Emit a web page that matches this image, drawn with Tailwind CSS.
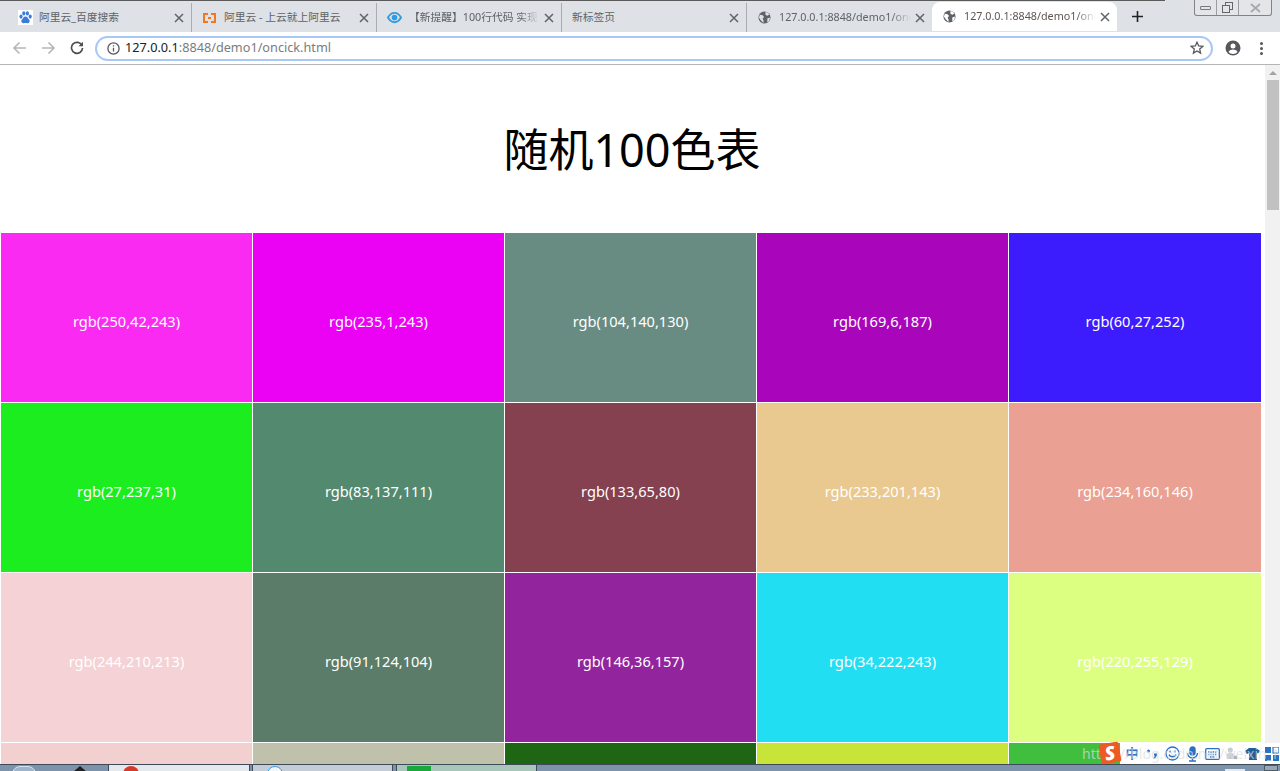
<!DOCTYPE html>
<html lang="zh-CN">
  <head>
    <meta charset="UTF-8" />
    <title>随机100色表</title>
    <script src="https://cdn.jsdelivr.net/npm/@tailwindcss/browser@4"></script>
  </head>
  <body class="relative flex flex-col h-screen overflow-hidden bg-white font-['Noto_Sans','Noto_Sans_CJK_SC',sans-serif]">
    <!-- tab strip -->
    <div class="relative flex items-start h-8 pl-[7px] pt-[3px] bg-[#dee1e6] text-[10.750px] text-[#5f6368] shrink-0">
      <div class="absolute top-0 left-0 w-[1165px] h-px bg-[#5a5a5a]"></div>
      <div class="flex items-center w-[185px] h-[29px] pl-[11px] pr-1 border-r border-[#a9acb0]">
        <svg class="w-[15px] h-[15px] mr-[6px] shrink-0" viewBox="0 0 16 16"><rect width="16" height="16" fill="#fff"/><g fill="#3b7bdd"><ellipse cx="3.200" cy="7" rx="1.700" ry="2.200"/><ellipse cx="6.200" cy="3.600" rx="1.700" ry="2.300"/><ellipse cx="10" cy="3.600" rx="1.700" ry="2.300"/><ellipse cx="13" cy="7" rx="1.700" ry="2.200"/><path d="M8 7c-2 0-2.500 2-4 3.500C2.800 12 4 14.500 6 14c1-.2 3-.2 4 0 2 .5 3.200-2 2-3.500C10.500 9 10 7 8 7z"/></g></svg>
        <span class="flex-1 truncate">阿里云_百度搜索</span>
        <svg class="w-2.5 h-2.5 ml-1 mr-[3px]" viewBox="0 0 10 10" stroke="#5f6368" stroke-width="1.500"><path d="M1 1l8 8M9 1l-8 8"/></svg>
      </div>
      <div class="flex items-center w-[185px] h-[29px] pl-[11px] pr-1 border-r border-[#a9acb0]">
        <svg class="w-[13px] h-[10px] mr-[8px] shrink-0" viewBox="0 0 13 10" fill="none" stroke="#f4761d" stroke-width="2"><path d="M5 1H1v8h4M8 1h4v8H8M5 5h3"/></svg>
        <span class="flex-1 truncate">阿里云 - 上云就上阿里云</span>
        <svg class="w-2.5 h-2.5 ml-1 mr-[3px]" viewBox="0 0 10 10" stroke="#5f6368" stroke-width="1.500"><path d="M1 1l8 8M9 1l-8 8"/></svg>
      </div>
      <div class="flex items-center w-[185px] h-[29px] pl-[10px] pr-1 border-r border-[#a9acb0]">
        <svg class="w-[15px] h-[13px] mr-[7px] shrink-0" viewBox="0 0 16 13" fill="none" stroke="#2f9ce0" stroke-width="2"><path d="M1 6.500C3 3 5.500 1.500 8 1.500s5 1.500 7 5c-2 3.500-4.500 5-7 5s-5-1.500-7-5z"/><circle cx="8" cy="6.500" r="2" fill="#2f9ce0"/></svg>
        <span class="flex-1 whitespace-nowrap overflow-hidden [mask-image:linear-gradient(90deg,#000_85%,transparent)]">【新提醒】100行代码 实现</span>
        <svg class="w-2.5 h-2.5 ml-1 mr-[3px]" viewBox="0 0 10 10" stroke="#5f6368" stroke-width="1.500"><path d="M1 1l8 8M9 1l-8 8"/></svg>
      </div>
      <div class="flex items-center w-[185px] h-[29px] pl-[10px] pr-1 border-r border-[#a9acb0]">
        <span class="flex-1 truncate">新标签页</span>
        <svg class="w-2.5 h-2.5 ml-1 mr-[3px]" viewBox="0 0 10 10" stroke="#5f6368" stroke-width="1.500"><path d="M1 1l8 8M9 1l-8 8"/></svg>
      </div>
      <div class="flex items-center w-[185px] h-[29px] pl-[11px] pr-1">
        <svg class="w-[13px] h-[13px] mr-[8px] shrink-0" viewBox="0 0 14 14"><circle cx="7" cy="7" r="6.500" fill="#5f6368"/><path d="M2 4l3 .5 1.500 2L5 8l1 2.500V13L3 10 1 7zM8 1l3 1 1 2-2 1-2-1zM10 8l3-1-1 4-2 1z" fill="#dee1e6"/></svg>
        <span class="flex-1 whitespace-nowrap overflow-hidden [mask-image:linear-gradient(90deg,#000_85%,transparent)]">127.0.0.1:8848/demo1/oncick</span>
        <svg class="w-2.5 h-2.5 ml-1 mr-[3px]" viewBox="0 0 10 10" stroke="#5f6368" stroke-width="1.500"><path d="M1 1l8 8M9 1l-8 8"/></svg>
      </div>
      <div class="flex items-center w-[185px] h-[29px] pl-[11px] pr-1 -mt-px bg-white rounded-t-lg text-[#5f5550]">
        <svg class="w-[13px] h-[13px] mr-[8px] shrink-0" viewBox="0 0 14 14"><circle cx="7" cy="7" r="6.500" fill="#5f6368"/><path d="M2 4l3 .5 1.500 2L5 8l1 2.500V13L3 10 1 7zM8 1l3 1 1 2-2 1-2-1zM10 8l3-1-1 4-2 1z" fill="#fff"/></svg>
        <span class="flex-1 whitespace-nowrap overflow-hidden [mask-image:linear-gradient(90deg,#000_85%,transparent)]">127.0.0.1:8848/demo1/oncick</span>
        <svg class="w-2.5 h-2.5 ml-1 mr-[3px]" viewBox="0 0 10 10" stroke="#5f6368" stroke-width="1.500"><path d="M1 1l8 8M9 1l-8 8"/></svg>
      </div>
      <svg class="w-[11px] h-[11px] ml-[15px] mt-[8px]" viewBox="0 0 11 11" stroke="#202124" stroke-width="1.600"><path d="M5.500 0v11M0 5.500h11"/></svg>
      <!-- window buttons -->
      <div class="absolute top-0 left-[1194px] flex h-4 w-[78px] bg-[#e3e5e9] border border-t-0 border-[#7f8388] rounded-b-[3px]">
        <div class="flex items-center justify-center w-[22px] border-r border-[#9a9da2]"><div class="w-[11px] h-1 border border-[#777] rounded-[1px]"></div></div>
        <div class="flex items-center justify-center w-[22px] border-r border-[#9a9da2]"><svg class="w-[11px] h-[11px]" viewBox="0 0 11 11" fill="none" stroke="#666"><rect x="3.500" y=".5" width="7" height="7"/><rect x=".5" y="3.500" width="7" height="7" fill="#e3e5e9"/></svg></div>
        <div class="flex items-center justify-center flex-1"><svg class="w-[11px] h-[10px]" viewBox="0 0 11 10" stroke="#a6a9ae" stroke-width="1.800"><path d="M1 1l9 8M10 1l-9 8"/></svg></div>
      </div>
    </div>
    <!-- toolbar -->
    <div class="flex items-center h-[33px] pl-3 pr-[17px] border-b border-[#b5b5b5] shrink-0">
      <svg class="w-[15px] h-[14px]" viewBox="0 0 15 14" fill="none" stroke="#b4b6b9" stroke-width="1.600"><path d="M14 7H2M7.500 1.500 2 7l5.500 5.500"/></svg>
      <svg class="w-[15px] h-[14px] ml-[14px]" viewBox="0 0 15 14" fill="none" stroke="#b4b6b9" stroke-width="1.600"><path d="M1 7h12M7.500 1.500 13 7l-5.500 5.500"/></svg>
      <svg class="w-[14px] h-[14px] ml-[14px]" viewBox="0 0 14 14" fill="none" stroke="#4c4f53" stroke-width="1.700"><path d="M12 4.500A5.500 5.500 0 1 0 12.500 7"/><path d="M13 .8v4.500H8.500" fill="#4c4f53" stroke="none"/></svg>
      <div class="flex items-center flex-1 h-[25px] ml-[11px] pl-[10px] pr-[7px] border-2 border-[#a9c8f5] rounded-full text-[12.700px]">
        <svg class="w-[13px] h-[13px] mr-[5px]" viewBox="0 0 13 13" fill="none" stroke="#55585c" stroke-width="1.300"><circle cx="6.500" cy="6.500" r="5.600"/><path d="M6.500 5.800v3.700M6.500 3.300v1.200"/></svg>
        <span class="text-[#202124]">127.0.0.1</span><span class="flex-1 text-[#7a7d81]">:8848/demo1/oncick.html</span>
        <svg class="w-[14px] h-[14px]" viewBox="0 0 14 14" fill="none" stroke="#55585c" stroke-width="1.300"><path d="M7 1.200 8.700 5l4.100.4-3.100 2.700.9 4L7 10l-3.600 2.100.9-4-3.100-2.700L5.300 5z"/></svg>
      </div>
      <svg class="w-[16px] h-[16px] ml-[12px]" viewBox="0 0 16 16"><circle cx="8" cy="8" r="7.500" fill="#55585c"/><circle cx="8" cy="6" r="2.500" fill="#fff"/><path d="M3.500 12c1-2 2.800-2.600 4.500-2.600s3.500.6 4.500 2.600c-1 1.200-2.700 2-4.500 2s-3.500-.8-4.500-2z" fill="#fff"/></svg>
      <div class="flex flex-col gap-[2px] ml-[19px]">
        <div class="w-[3px] h-[3px] rounded-full bg-[#55585c]"></div>
        <div class="w-[3px] h-[3px] rounded-full bg-[#55585c]"></div>
        <div class="w-[3px] h-[3px] rounded-full bg-[#55585c]"></div>
      </div>
    </div>
    <!-- page area -->
    <div class="flex flex-1 min-h-0">
      <div class="flex-1 min-w-0 overflow-hidden">
        <h1 class="h-[168px] pt-[51px] pr-[1px] text-center text-[45px] leading-[68px] font-normal text-black">随机100色表</h1>
        <div class="grid grid-cols-[251px_251px_251px_251px_252px] auto-rows-[169px] gap-px w-[1261px] ml-px text-[14.600px] text-white">
          <div class="flex items-center justify-center pt-2 bg-[rgb(250,42,243)]">rgb(250,42,243)</div>
          <div class="flex items-center justify-center pt-2 bg-[rgb(235,1,243)]">rgb(235,1,243)</div>
          <div class="flex items-center justify-center pt-2 bg-[rgb(104,140,130)]">rgb(104,140,130)</div>
          <div class="flex items-center justify-center pt-2 bg-[rgb(169,6,187)]">rgb(169,6,187)</div>
          <div class="flex items-center justify-center pt-2 bg-[rgb(60,27,252)]">rgb(60,27,252)</div>
          <div class="flex items-center justify-center pt-2 bg-[rgb(27,237,31)]">rgb(27,237,31)</div>
          <div class="flex items-center justify-center pt-2 bg-[rgb(83,137,111)]">rgb(83,137,111)</div>
          <div class="flex items-center justify-center pt-2 bg-[rgb(133,65,80)]">rgb(133,65,80)</div>
          <div class="flex items-center justify-center pt-2 bg-[rgb(233,201,143)]">rgb(233,201,143)</div>
          <div class="flex items-center justify-center pt-2 bg-[rgb(234,160,146)]">rgb(234,160,146)</div>
          <div class="flex items-center justify-center pt-2 bg-[rgb(244,210,213)]">rgb(244,210,213)</div>
          <div class="flex items-center justify-center pt-2 bg-[rgb(91,124,104)]">rgb(91,124,104)</div>
          <div class="flex items-center justify-center pt-2 bg-[rgb(146,36,157)]">rgb(146,36,157)</div>
          <div class="flex items-center justify-center pt-2 bg-[rgb(34,222,243)]">rgb(34,222,243)</div>
          <div class="flex items-center justify-center pt-2 bg-[rgb(220,255,129)]">rgb(220,255,129)</div>
          <div class="bg-[#f3d0d0]"></div>
          <div class="bg-[#bfc1ab]"></div>
          <div class="bg-[#1f6614]"></div>
          <div class="bg-[#c9e438]"></div>
          <div class="bg-[#40bf3f]"></div>
        </div>
      </div>
      <!-- scrollbar -->
      <div class="flex flex-col items-center w-[15px] bg-[#f1f1f1] shrink-0">
        <div class="mt-[6px] w-0 h-0 border-x-[4px] border-x-transparent border-b-[4px] border-b-[#a3a3a3]"></div>
        <div class="mt-[5px] w-3 h-[130px] ml-px bg-[#c1c1c1]"></div>
      </div>
    </div>
    <!-- taskbar, only its top edge is in frame -->
    <div class="flex items-start h-[7px] bg-[#7d93ab] border-t border-[#3e4a57] shrink-0">
      <div class="w-6 h-4 ml-3 mt-px rounded-full bg-[#9db4cb] border border-[#d5e3f0]"></div>
      <div class="w-0 h-0 ml-[37px] mt-px border-x-[7px] border-x-transparent border-b-[6px] border-b-[#1e2226]"></div>
      <div class="relative w-[142px] h-full ml-[21px] bg-[#e4e9ee] border-x border-[#3e4a57]"><div class="absolute left-[14px] top-[1px] w-4 h-4 rounded-full bg-[#d8392b]"></div></div>
      <div class="relative w-[141px] h-full ml-[2px] bg-[#c4ccd8] border-x border-[#3e4a57]"><div class="absolute left-[14px] top-[1px] w-4 h-4 rounded-full bg-[#f0f6fb] border border-[#3d9be0]"></div></div>
      <div class="relative w-[141px] h-full ml-[3px] bg-[#a9c6bb] border-x border-[#3e4a57]"><div class="absolute left-[10px] top-[1px] w-6 h-4 bg-[#1aa73c]"></div></div>
      <div class="w-[20px] h-[2px] ml-[688px] mt-[4px] bg-white/80"></div>
      <div class="w-[14px] h-full ml-[19px] bg-[#98a6b5] border border-[#4e5b68]"></div>
    </div>
    <!-- input method bar and watermark over the page -->
    <div class="absolute left-[1120px] top-[743px] grid grid-cols-[repeat(8,20px)] items-center justify-items-center w-[160px] h-[21px] pl-[2px] bg-white text-[#2a71c4]">
      <span class="text-[13px] leading-none font-bold">中</span>
      <svg class="w-[12px] h-[12px]" viewBox="0 0 12 12" fill="#2a71c4"><circle cx="2.500" cy="3" r="1.500"/><path d="M8 5.500h3c0 2.500-1 4-3 5.500l-.8-.8C8.200 9.200 8.600 8.400 8.700 7.500H8z"/></svg>
      <svg class="w-[15px] h-[15px]" viewBox="0 0 15 15" fill="none" stroke="#2a71c4" stroke-width="1.300"><circle cx="7.500" cy="7.500" r="6.500"/><path d="M4 8.500c1 3 6 3 7 0"/><path d="M5 4.500v2M10 4.500v2"/></svg>
      <svg class="w-[13px] h-[16px]" viewBox="0 0 13 16" fill="none" stroke="#2a71c4" stroke-width="1.400"><rect x="4" y="1" width="5" height="8" rx="2.500" fill="#2a71c4"/><path d="M1.500 7a5 5 0 0 0 10 0M6.500 12v3M3 15h7"/></svg>
      <svg class="w-[15px] h-[12px]" viewBox="0 0 15 12" fill="none" stroke="#2a71c4" stroke-width="1.300"><rect x=".7" y=".7" width="13.600" height="10.600" rx="1"/><path d="M3 4h9M3 6.500h9M5 9h5" stroke-dasharray="1.500 .8"/></svg>
      <svg class="w-[12px] h-[15px]" viewBox="0 0 14 15" fill="#c7ccd2"><circle cx="5" cy="3.500" r="3"/><path d="M1 14V9c0-1.500 2-2.500 4-2.500S9 7.500 9 9v5z"/><rect x="9" y="10" width="4" height="4" fill="#aab0b8"/></svg>
      <svg class="w-[15px] h-[14px]" viewBox="0 0 15 14" fill="#1f5f98"><path d="M4 1 0 4l2 3 2-1v7h8V6l1 .5L15 4 11 1z"/></svg>
      <svg class="w-[14px] h-[14px]" viewBox="0 0 14 14" fill="#2a71c4"><rect width="6" height="6"/><rect x="8" width="6" height="6" fill="none" stroke="#2a71c4" stroke-width="1.200"/><rect y="8" width="6" height="6"/><rect x="8" y="8" width="6" height="6"/></svg>
    </div>
    <div class="absolute left-[1082px] top-[745px] w-[198px] overflow-hidden text-[14px] leading-[18px] text-[#dcdcdc]/70 whitespace-nowrap">https://blog.csdn.net/weixin_NoQu</div>
    <div class="absolute left-[1100px] top-[743px] flex items-center justify-center w-5 h-5 bg-[#ee5a24] rotate-[-10deg] rounded-[2px] text-[19px] leading-none italic font-black text-white">S</div>
  </body>
</html>
